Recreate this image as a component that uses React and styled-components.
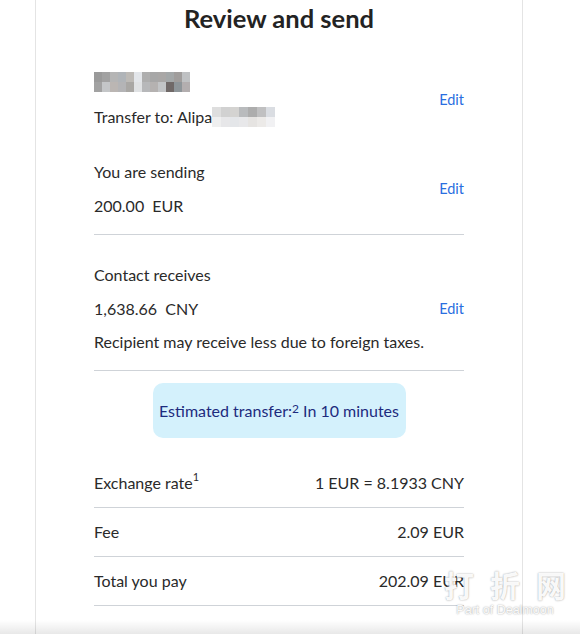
import React from 'react';
import styled, { createGlobalStyle } from 'styled-components';

const GlobalStyle = createGlobalStyle`
  html, body {
    margin: 0;
    padding: 0;
    background: #fff;
  }
  body {
    font-family: Lato, "Noto Sans", "Noto Sans CJK SC", sans-serif;
    color: #2a2a2a;
    -webkit-font-smoothing: antialiased;
  }
`;

const Page = styled.div`
  position: relative;
  height: 634px;
  overflow: hidden;
`;

const Card = styled.div`
  margin-left: 35px;
  width: 488px;
  height: 100%;
  box-sizing: border-box;
  border-left: 1px solid #e4e4e4;
  border-right: 1px solid #e4e4e4;
  padding: 0 58px 0 58px;
`;

const Title = styled.h1`
  margin: 0 0 36px;
  font-size: 25.5px;
  line-height: 36px;
  font-weight: 700;
  text-align: center;
  color: #232323;
`;

const Section = styled.div`
  display: flex;
  align-items: center;
  justify-content: space-between;
  margin-top: ${(p) => p.$top || 0}px;
`;

const Column = styled.div`
  display: flex;
  flex-direction: column;
  gap: ${(p) => p.$gap || 14}px;
  margin-top: ${(p) => p.$top || 0}px;
`;

const Line = styled.div`
  font-size: 16px;
  line-height: 20px;
  display: flex;
  align-items: center;
  white-space: pre;
  margin-top: ${(p) => p.$top || 0}px;
`;

const Row = styled.div`
  display: flex;
  align-items: center;
  justify-content: space-between;
`;

const Edit = styled.a`
  font-size: 14.5px;
  line-height: 20px;
  color: #2a6ee0;
  cursor: pointer;
`;

const Divider = styled.hr`
  margin: ${(p) => p.$top || 0}px 0 0;
  border: none;
  border-top: 1px solid #cfd3d8;
`;

const Mosaic = styled.div`
  display: grid;
  grid-template-columns: repeat(${(p) => p.$cols}, ${(p) => p.$w}px);
  grid-auto-rows: ${(p) => p.$h}px;
`;

const Cell = styled.span`
  background: ${(p) => p.$c};
`;

const Banner = styled.div`
  margin: 12px auto 0;
  width: 253px;
  height: 55px;
  border-radius: 10px;
  background: #d4f1fc;
  color: #1d2b7e;
  font-size: 16px;
  display: flex;
  align-items: center;
  justify-content: center;
  white-space: pre;
`;

const Sup = styled.sup`
  font-size: ${(p) => p.$size || 11}px;
  line-height: 0;
  position: relative;
  top: -2px;
`;

const Summary = styled.div`
  margin-top: 21px;
`;

const SummaryRow = styled.div`
  display: flex;
  justify-content: space-between;
  align-items: center;
  padding: 14px 0;
  border-bottom: 1px solid #cfd3d8;
  font-size: 16px;
  line-height: 20px;
`;

const BottomShade = styled.div`
  position: absolute;
  left: 0;
  right: 0;
  bottom: 0;
  height: 14px;
  background: linear-gradient(to bottom, rgba(0, 0, 0, 0), rgba(0, 0, 0, 0.09));
  pointer-events: none;
`;

const Watermark = styled.div`
  position: absolute;
  left: 443px;
  top: 566px;
  width: 124px;
  color: rgba(255, 255, 255, 0.95);
  text-shadow: 0 0 2px rgba(0, 0, 0, 0.3), 0 0 1px rgba(0, 0, 0, 0.15);
  text-align: center;
  pointer-events: none;
`;

const WatermarkCn = styled.div`
  font-family: "Noto Sans CJK SC", sans-serif;
  font-size: 30px;
  line-height: 36px;
  font-weight: 700;
  letter-spacing: 16px;
  margin-right: -16px;
`;

const WatermarkEn = styled.div`
  font-family: "Liberation Sans", sans-serif;
  font-size: 12.5px;
  line-height: 16px;
`;

const nameCells = [
  '#9a9a9a', '#a2a2a2', '#b5b5b5', '#b0b4b8', '#bdbab6', '#e3e6ea', '#aeaeae', '#a7a7a7', '#a9a7a6', '#a3a7a8', '#a09d9c', '#bfc1c3',
  '#a2a2a2', '#c4c6c8', '#bbb6b3', '#b4b4b6', '#a9a7a4', '#e0e2e4', '#b7b8ba', '#b5b2b1', '#c2c4c6', '#706968', '#8e9599', '#b3aeaf',
];

const aliCells = [
  '#dedede', '#d1d1d1', '#d4d3d1', '#b9bbbd', '#adadad', '#c0c0c1', '#dadde2',
  '#efefef', '#e7e7e9', '#e4e6e9', '#e8e8ea', '#e6e4e2', '#eceae8', '#f1f1f3',
];

export default function App() {
  return (
    <Page>
      <GlobalStyle />
      <Card>
        <Title>Review and send</Title>

        <Section>
          <Column $gap={15}>
            <Mosaic $cols={12} $w={8} $h={10}>
              {nameCells.map((c, i) => (
                <Cell key={i} $c={c} />
              ))}
            </Mosaic>
            <Line>
              Transfer to: Alipa
              <Mosaic $cols={7} $w={9} $h={10}>
                {aliCells.map((c, i) => (
                  <Cell key={i} $c={c} />
                ))}
              </Mosaic>
            </Line>
          </Column>
          <Edit>Edit</Edit>
        </Section>

        <Section $top={35}>
          <Column>
            <Line>You are sending</Line>
            <Line>200.00  EUR</Line>
          </Column>
          <Edit>Edit</Edit>
        </Section>

        <Divider $top={18} />

        <Column $gap={14} $top={30}>
          <Line>Contact receives</Line>
          <Row>
            <Line>1,638.66  CNY</Line>
            <Edit>Edit</Edit>
          </Row>
        </Column>
        <Line $top={13}>Recipient may receive less due to foreign taxes.</Line>

        <Divider $top={18} />

        <Banner>
          Estimated transfer:<Sup $size={12}>2</Sup> In 10 minutes
        </Banner>

        <Summary>
          <SummaryRow>
            <span>
              Exchange rate<Sup>1</Sup>
            </span>
            <span>1 EUR = 8.1933 CNY</span>
          </SummaryRow>
          <SummaryRow>
            <span>Fee</span>
            <span>2.09 EUR</span>
          </SummaryRow>
          <SummaryRow>
            <span>Total you pay</span>
            <span>202.09 EUR</span>
          </SummaryRow>
        </Summary>
      </Card>

      <Watermark>
        <WatermarkCn>打折网</WatermarkCn>
        <WatermarkEn>Part of Dealmoon</WatermarkEn>
      </Watermark>
      <BottomShade />
    </Page>
  );
}
